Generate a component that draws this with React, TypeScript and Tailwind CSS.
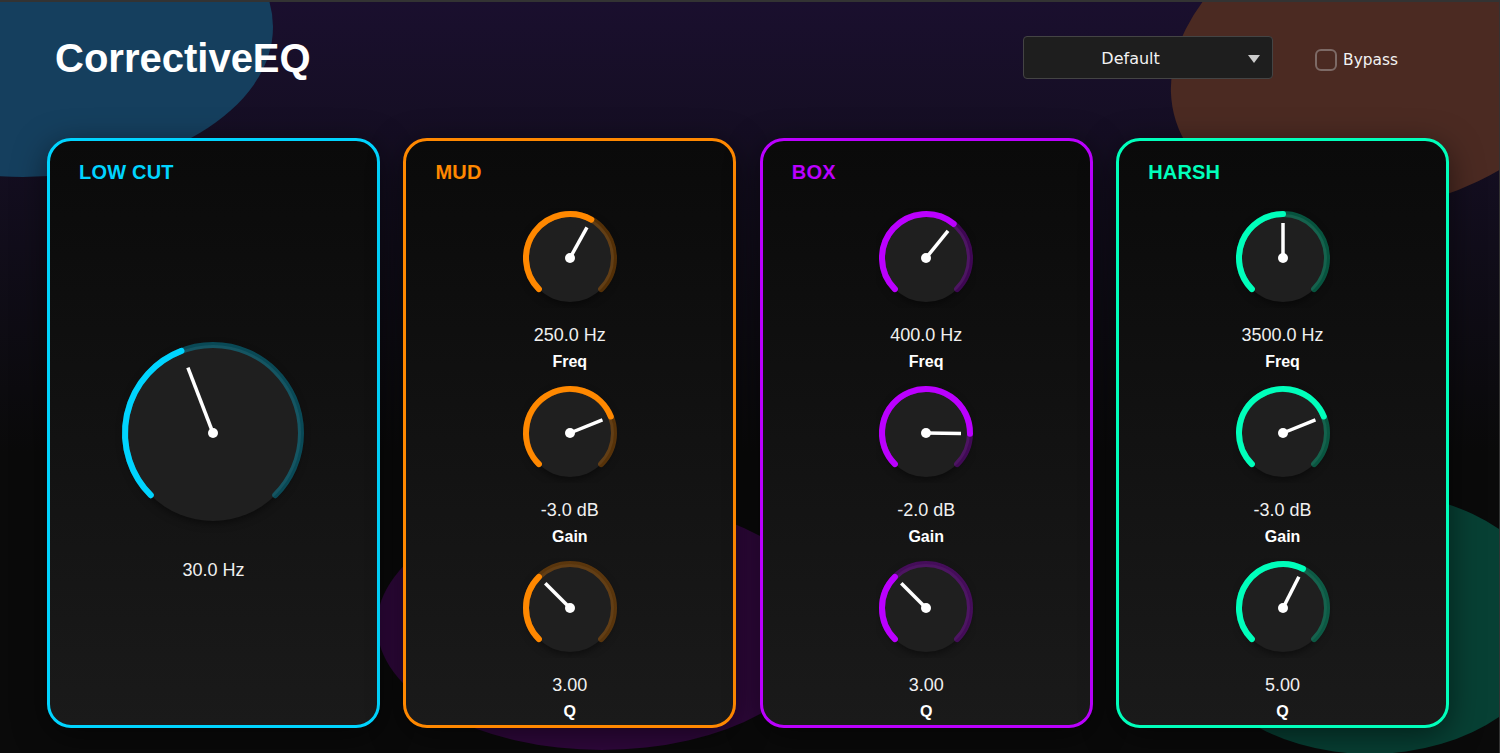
const panelFont = "font-['Liberation_Sans',Arial,sans-serif]";

type KnobData = { value: string; label?: string; angle: number };

const bands: { title: string; border: string; text: string; color: string; knobs: KnobData[] }[] = [
	{
		title: "MUD",
		border: "border-[#ff8800]",
		text: "text-[#ff8800]",
		color: "#ff8800",
		knobs: [
			{ value: "250.0 Hz", label: "Freq", angle: 29 },
			{ value: "-3.0 dB", label: "Gain", angle: 68 },
			{ value: "3.00", label: "Q", angle: -45 },
		],
	},
	{
		title: "BOX",
		border: "border-[#bb00ff]",
		text: "text-[#bb00ff]",
		color: "#bb00ff",
		knobs: [
			{ value: "400.0 Hz", label: "Freq", angle: 39 },
			{ value: "-2.0 dB", label: "Gain", angle: 91 },
			{ value: "3.00", label: "Q", angle: -45 },
		],
	},
	{
		title: "HARSH",
		border: "border-[#00ffbb]",
		text: "text-[#00ffbb]",
		color: "#00ffbb",
		knobs: [
			{ value: "3500.0 Hz", label: "Freq", angle: 0 },
			{ value: "-3.0 dB", label: "Gain", angle: 68 },
			{ value: "5.00", label: "Q", angle: 27 },
		],
	},
];

function polar(c: number, r: number, deg: number) {
	const a = (deg * Math.PI) / 180;
	return { x: c + r * Math.sin(a), y: c - r * Math.cos(a) };
}

function arc(c: number, r: number, from: number, to: number) {
	const s = polar(c, r, from);
	const e = polar(c, r, to);
	const large = to - from > 180 ? 1 : 0;
	return `M ${s.x} ${s.y} A ${r} ${r} 0 ${large} 1 ${e.x} ${e.y}`;
}

function Dial({ size, radius, needle, angle, color }: { size: number; radius: number; needle: number; angle: number; color: string }) {
	const c = size / 2;
	const tip = polar(c, needle, angle);
	return (
		<svg width={size} height={size} viewBox={`0 0 ${size} ${size}`} className="block shrink-0">
			<circle cx={c} cy={c} r={radius} fill="#1f1f1f" className="drop-shadow-[0_2px_4px_rgba(0,0,0,0.5)]" />
			<path d={arc(c, radius, -135, 135)} fill="none" stroke={color} strokeOpacity={0.3} strokeWidth={6} strokeLinecap="round" />
			<path d={arc(c, radius, -135, angle)} fill="none" stroke={color} strokeWidth={6} strokeLinecap="round" />
			<line x1={c} y1={c} x2={tip.x} y2={tip.y} stroke="#fff" strokeWidth={3.5} />
			<circle cx={c} cy={c} r={5} fill="#fff" />
		</svg>
	);
}

function Knob({ knob, color }: { knob: KnobData; color: string }) {
	return (
		<div className="flex h-[175px] flex-col items-center">
			<Dial size={100} radius={44} needle={35} angle={knob.angle} color={color} />
			<div className="mt-[17px] h-[21px] text-[18px] leading-[21px] text-[#f0f0f0]">{knob.value}</div>
			<div className="mt-[7px] h-[18px] text-[16px] leading-[18px] font-bold text-white">{knob.label}</div>
		</div>
	);
}

function Panel({ title, border, text, children }: { title: string; border: string; text: string; children: React.ReactNode }) {
	return (
		<section className={`h-[590px] min-w-0 flex-1 rounded-[24px] border-[3px] bg-gradient-to-b from-[#0a0a0a] to-[#1a1a1a] shadow-[0_8px_32px_rgba(0,0,0,0.5)] ${border}`}>
			<h2 className={`px-[29px] pt-[20px] text-[20px] leading-[23px] font-bold tracking-[0.2px] ${text}`}>{title}</h2>
			{children}
		</section>
	);
}

export default function App() {
	return (
		<div className={`relative h-[753px] w-[1500px] overflow-hidden border-t-2 border-r border-[#333333] bg-gradient-to-b from-[#1a0f2e] to-[#0a0a0a] to-60% ${panelFont}`}>
			{/* background blobs */}
			<div className="absolute top-[-125px] left-[-227px] h-[300px] w-[500px] rounded-[50%] bg-[#153f5e]" />
			<div className="absolute top-[-103px] left-[1165px] h-[306px] w-[450px] -rotate-[18deg] rounded-[50%] bg-[#4b2a22]" />
			<div className="absolute top-[498px] left-[377px] h-[250px] w-[450px] rounded-[50%] bg-[#30083d]" />
			<div className="absolute top-[490px] left-[1185px] h-[262px] w-[370px] rounded-[50%] bg-[#074034]" />

			<div className="relative flex h-full flex-col pr-[50px] pl-[47px]">
				<header className="flex h-[136px] shrink-0 items-start">
					<h1 className="mt-[33px] ml-[8px] flex-1 text-[40px] leading-[46px] font-bold text-white">CorrectiveEQ</h1>
					<div className="mt-[34px] flex h-[43px] w-[250px] items-center rounded border border-[#444444] bg-[#1e1e1e] pt-[2px] pr-[12px] font-['DejaVu_Sans',sans-serif] text-[16px] text-[#f2f2f2]">
						<span className="flex-1 pr-[11px] text-center">Default</span>
						<svg width="12" height="8" viewBox="0 0 12 8" className="shrink-0">
							<path d="M0 0 H12 L6 8 Z" fill="#cccccc" />
						</svg>
					</div>
					<label className="mt-[45px] mr-[51px] ml-[42px] flex items-center font-['DejaVu_Sans',sans-serif] text-[15.4px] text-[#f2f2f2]">
						<span className="mr-[6px] h-[22px] w-[22px] rounded-[6px] border-2 border-[#7d6a66]" />
						<span className="pt-[2px]">Bypass</span>
					</label>
				</header>

				<main className="flex gap-[23.5px]">
					<Panel title="LOW CUT" border="border-[#00d4ff]" text="text-[#00d4ff]">
						<div className="flex flex-col items-center pt-[149px]">
							<Dial size={200} radius={88} needle={70} angle={-21} color="#00d4ff" />
							<div className="mt-[27px] text-[18px] leading-[21px] text-[#f0f0f0]">30.0 Hz</div>
						</div>
					</Panel>
					{bands.map((band) => (
						<Panel key={band.title} title={band.title} border={band.border} text={band.text}>
							<div className="pt-[24px]">
								{band.knobs.map((knob) => (
									<Knob key={knob.label} knob={knob} color={band.color} />
								))}
							</div>
						</Panel>
					))}
				</main>
			</div>
		</div>
	);
}
